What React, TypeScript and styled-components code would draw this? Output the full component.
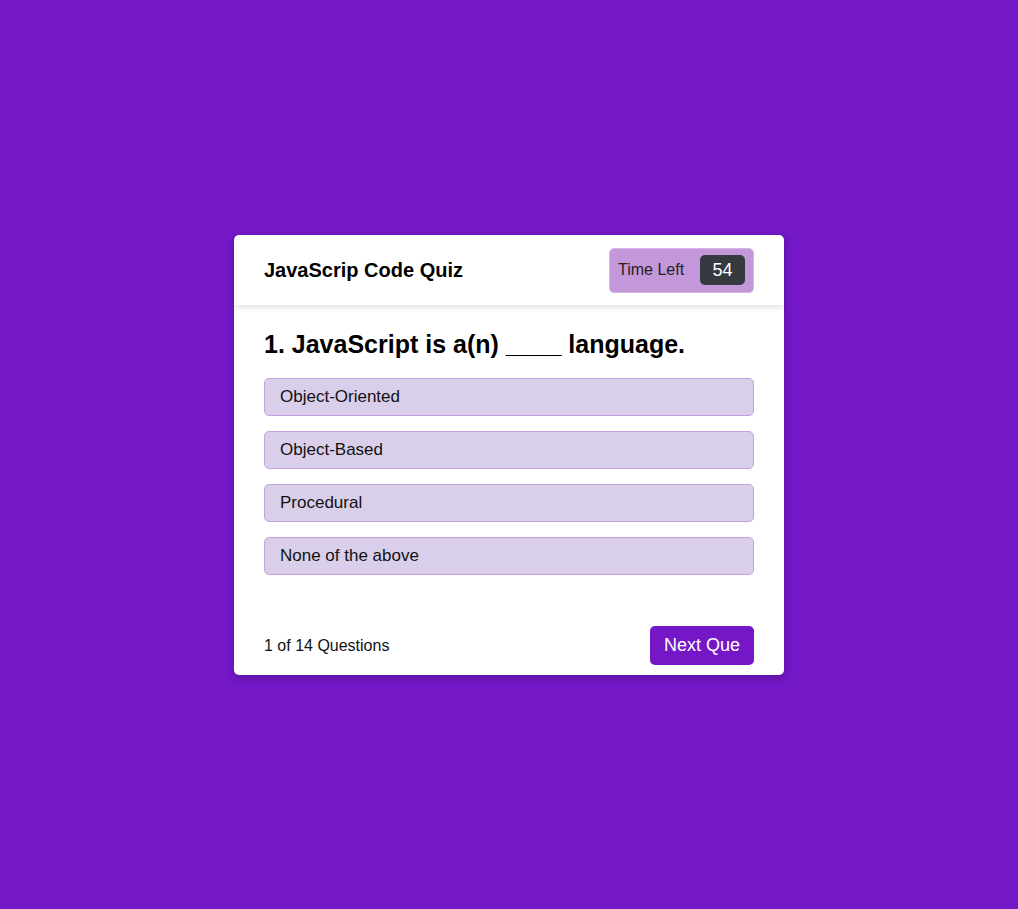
import React from "react";
import styled, { createGlobalStyle } from "styled-components";

const Global = createGlobalStyle`
  html, body { margin: 0; padding: 0; }
  body {
    background: #7418c8;
    font-family: "Liberation Sans", Arial, sans-serif;
    min-height: 909px;
  }
`;

const Page = styled.div`
  display: flex;
  justify-content: center;
  padding-top: 235px;
`;

const Card = styled.div`
  width: 550px;
  height: 440px;
  background: #fff;
  border-radius: 5px;
  box-shadow: 0 4px 10px rgba(0, 0, 0, 0.2);
  display: flex;
  flex-direction: column;
`;

const Header = styled.header`
  height: 70px;
  padding: 0 30px;
  display: flex;
  align-items: center;
  justify-content: space-between;
  box-shadow: 0 3px 5px rgba(0, 0, 0, 0.1);
  position: relative;
  z-index: 1;
`;

const Title = styled.div`
  font-size: 20px;
  font-weight: bold;
  color: #000;
`;

const Timer = styled.div`
  width: 145px;
  height: 45px;
  box-sizing: border-box;
  background: #c497da;
  border: 1px solid #d4b5e6;
  border-radius: 5px;
  display: flex;
  align-items: center;
  justify-content: space-between;
  padding: 0 8px 0 8px;
`;

const TimerLabel = styled.span`
  font-size: 16px;
  color: #222;
`;

const TimerValue = styled.span`
  width: 45px;
  height: 30px;
  background: #343a40;
  color: #fff;
  border-radius: 5px;
  font-size: 18px;
  display: flex;
  align-items: center;
  justify-content: center;
`;

const Body = styled.section`
  padding: 25px 30px 0;
  flex: 1;
  display: flex;
  flex-direction: column;
`;

const Question = styled.div`
  font-size: 25px;
  font-weight: bold;
  color: #000;
  line-height: 29px;
  margin-bottom: 19px;
`;

const Options = styled.div`
  display: flex;
  flex-direction: column;
  gap: 15px;
`;

const Option = styled.div`
  height: 38px;
  box-sizing: border-box;
  background: #dacfea;
  border: 1px solid #c2a3e0;
  border-radius: 5px;
  padding: 0 15px;
  display: flex;
  align-items: center;
  font-size: 17px;
  color: #111;
`;

const Footer = styled.footer`
  padding: 0 30px 10px;
  margin-top: auto;
  display: flex;
  align-items: center;
  justify-content: space-between;
`;

const Count = styled.span`
  font-size: 16px;
  color: #111;
`;

const NextButton = styled.button`
  height: 39px;
  width: 104px;
  background: #7617c7;
  color: #fff;
  border: none;
  border-radius: 5px;
  font-family: inherit;
  font-size: 18px;
  cursor: pointer;
`;

const options = ["Object-Oriented", "Object-Based", "Procedural", "None of the above"];

export default function App() {
  return (
    <>
      <Global />
      <Page>
        <Card>
          <Header>
            <Title>JavaScrip Code Quiz</Title>
            <Timer>
              <TimerLabel>Time Left</TimerLabel>
              <TimerValue>54</TimerValue>
            </Timer>
          </Header>
          <Body>
            <Question>1. JavaScript is a(n) ____ language.</Question>
            <Options>
              {options.map((o) => (
                <Option key={o}>{o}</Option>
              ))}
            </Options>
          </Body>
          <Footer>
            <Count>1 of 14 Questions</Count>
            <NextButton>Next Que</NextButton>
          </Footer>
        </Card>
      </Page>
    </>
  );
}
